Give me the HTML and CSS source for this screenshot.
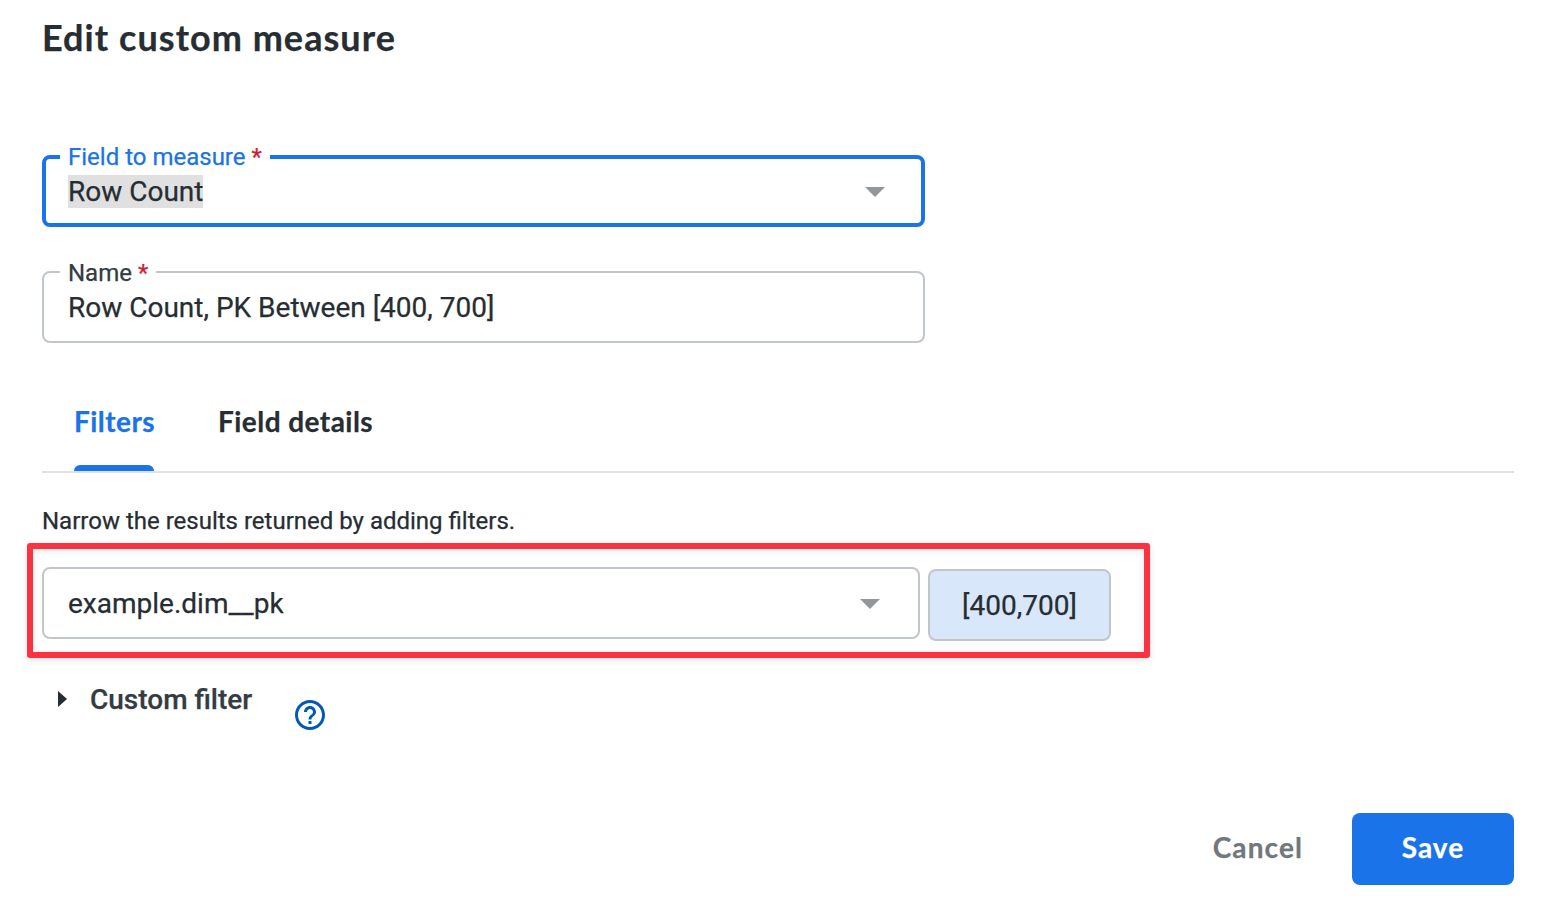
FILE: index.html
```html
<!DOCTYPE html>
<html lang="en">
<head>
<meta charset="utf-8">
<title>Edit custom measure</title>
<link rel="stylesheet" href="styles.css">
</head>
<body>
<main class="dialog">
  <h1 class="title"><span class="title-text">Edit custom measure</span></h1>
  <div class="field field-focused">
    <span class="label">Field to measure <span class="required">*</span></span>
    <span class="value"><span class="selected">Row Count</span></span>
    <svg class="caret" viewBox="0 0 20 10"><path d="M0 0h20L10 10z"/></svg>
  </div>
  <div class="field field-name">
    <span class="label">Name <span class="required">*</span></span>
    <span class="value">Row Count, PK Between [400, 700]</span>
  </div>
  <nav class="tabs">
    <span class="tab tab-active">Filters</span>
    <span class="tab tab-details">Field details</span>
  </nav>
  <p class="hint">Narrow the results returned by adding filters.</p>
  <section class="highlight">
    <div class="field field-filter">
      <span class="value dimension">example.dim__pk</span>
      <svg class="caret" viewBox="0 0 20 10"><path d="M0 0h20L10 10z"/></svg>
    </div>
    <div class="range">[400,700]</div>
  </section>
  <div class="custom">
    <svg class="arrow" viewBox="0 0 9 16"><path d="M0 0l9 8-9 8z"/></svg>
    <span class="custom-text">Custom filter</span>
    <svg class="help" viewBox="0 0 24 24"><path d="M11 18h2v-2h-2v2zm1-16C6.48 2 2 6.48 2 12s4.48 10 10 10 10-4.48 10-10S17.520 2 12 2zm0 18c-4.410 0-8-3.590-8-8s3.590-8 8-8 8 3.590 8 8-3.590 8-8 8zm0-14c-2.210 0-4 1.790-4 4h2c0-1.100.9-2 2-2s2 .9 2 2c0 2-3 1.750-3 5h2c0-2.250 3-2.500 3-5 0-2.210-1.790-4-4-4z"/></svg>
  </div>
  <footer class="actions">
    <button class="cancel">Cancel</button>
    <button class="save">Save</button>
  </footer>
</main>
</body>
</html>
```
FILE: styles.css
```css
* { box-sizing: border-box; }
body {
  margin: 0;
  background: #fff;
  color: #262d33;
  font: 28px/36px Roboto, sans-serif;
  -webkit-text-stroke: .25px currentColor;
}
.dialog {
  display: flex;
  flex-direction: column;
  width: 1552px;
  height: 907px;
  padding: 15px 38px 22px 42px;
  overflow: hidden;
}
.title {
  margin: 0 0 96px;
  font: 700 36px/44px Lato, sans-serif;
  letter-spacing: 1.05px;
}
.field {
  position: relative;
  display: flex;
  align-items: center;
  justify-content: space-between;
  width: 883px;
  height: 72px;
  padding: 2px 38px 0 24px;
  border: 2px solid #c1c6cc;
  border-radius: 8px;
}
.field-focused {
  padding: 0 36px 0 22px;
  border: 4px solid #1a73e8;
}
.field-focused .caret { margin-top: 2px; }
.field-name { margin-top: 44px; }
.label {
  position: absolute;
  top: -14px;
  left: 16px;
  padding: 0 8px;
  background: #fff;
  color: #343c42;
  font-size: 24px;
  line-height: 28px;
  white-space: nowrap;
}
.field-focused .label {
  top: -16px;
  left: 14px;
  color: #1a73e8;
}
.required { color: #cc1f36; }
.value { white-space: nowrap; }
.selected {
  display: block;
  background: #e0e0e0;
  line-height: 33px;
}
.caret {
  width: 20px;
  height: 10px;
  fill: #939799;
}
.tabs {
  display: flex;
  gap: 64px;
  height: 76px;
  margin-top: 54px;
  padding-left: 32px;
  border-bottom: 2px solid #dee1e5;
  font: 700 28px/48px Lato, sans-serif;
  letter-spacing: .45px;
}
.tab { white-space: nowrap; }
.tab-active {
  display: flex;
  flex-direction: column;
  justify-content: space-between;
  width: 80px;
  color: #1a73e8;
}
.tab-active::after {
  content: "";
  height: 6px;
  border-radius: 6px 6px 0 0;
  background: #1a73e8;
}
.hint {
  margin: 34px 0 8px;
  font-size: 24px;
  line-height: 28px;
}
.highlight {
  display: flex;
  gap: 8px;
  width: 1123px;
  height: 115px;
  margin-left: -15px;
  padding: 18px 9px;
  border: 6px solid #fb3340;
  border-radius: 3px;
  box-shadow: 0 2px 7px rgba(0, 0, 0, .12), inset 0 2px 7px rgba(0, 0, 0, .1);
}
.field-filter { width: 878px; }
.range {
  width: 183px;
  height: 72px;
  margin-top: 2px;
  border: 2px solid #c1c6cc;
  border-radius: 8px;
  background: #d9e7fb;
  line-height: 70px;
  text-align: center;
}
.custom {
  display: flex;
  margin-top: 23px;
  padding-left: 16px;
  color: #343c42;
  font-weight: 500;
}
.arrow {
  width: 9px;
  height: 16px;
  margin: 10px 23px 0 0;
  fill: #262d33;
}
.custom-text {
  width: 202px;
  padding-top: 1px;
}
.help {
  width: 36px;
  height: 36px;
  margin-top: 16px;
  fill: #0059b8;
}
.actions {
  display: flex;
  justify-content: flex-end;
  gap: 49px;
  margin-top: auto;
}
.actions button {
  height: 72px;
  padding: 0 0 3px;
  border: 0;
  border-radius: 8px;
  font: 700 28px/69px Lato, sans-serif;
  letter-spacing: 1.1px;
}
.cancel {
  background: none;
  color: #70777d;
}
.save {
  width: 162px;
  background: #1a73e8;
  color: #fff;
}
```
